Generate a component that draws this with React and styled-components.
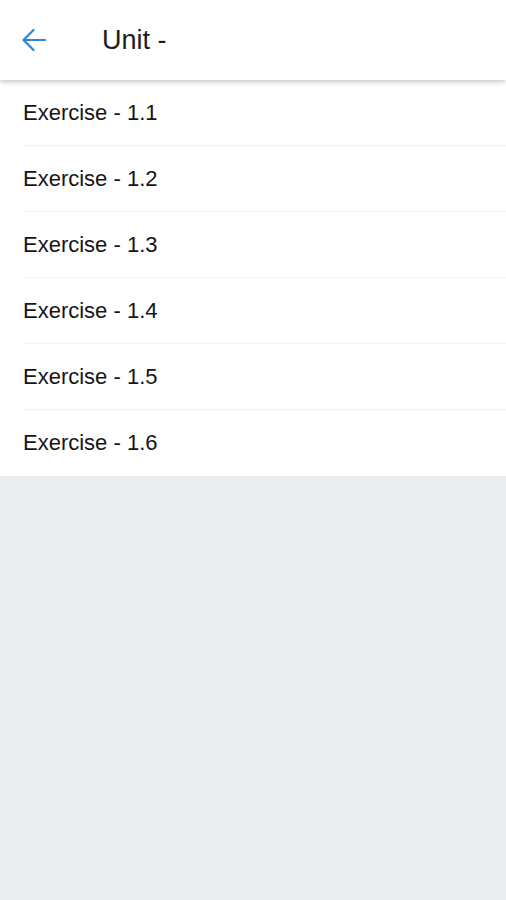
import React from "react";
import styled, { createGlobalStyle } from "styled-components";

const GlobalStyle = createGlobalStyle`
  html, body {
    margin: 0;
    padding: 0;
    background: #e9edf0;
    font-family: "Liberation Sans", Arial, sans-serif;
  }
`;

const Page = styled.div`
  min-height: 100vh;
  width: 100%;
  background: #e9edf0;
`;

const Header = styled.header`
  position: relative;
  z-index: 2;
  height: 80px;
  display: flex;
  align-items: center;
  background: #fff;
  box-shadow: 0 2px 5px rgba(0, 0, 0, 0.22);
`;

const BackButton = styled.button`
  width: 48px;
  height: 48px;
  margin-left: 10px;
  padding: 0;
  border: 0;
  background: transparent;
  display: flex;
  align-items: center;
  justify-content: center;
  cursor: pointer;
`;

const Title = styled.h1`
  margin: 0 0 0 44px;
  font-size: 27px;
  font-weight: 400;
  color: #1c1c1c;
`;

const List = styled.ul`
  list-style: none;
  margin: 0;
  padding: 0;
  background: #fff;
`;

const Row = styled.li`
  height: 66px;
  box-sizing: border-box;
  margin-left: 23px;
  display: flex;
  align-items: center;
  font-size: 22px;
  color: #151515;
  border-bottom: 1px solid ${(p) => (p.$last ? "transparent" : "#f1f1f1")};
`;

const BackArrow = () => (
  <svg width="26" height="24" viewBox="0 0 26 24" fill="none">
    <path
      d="M24 12H3M12.5 2L2.5 12l10 10"
      stroke="#2a86d9"
      strokeWidth="2.2"
      strokeLinecap="round"
      strokeLinejoin="round"
    />
  </svg>
);

const exercises = ["1.1", "1.2", "1.3", "1.4", "1.5", "1.6"];

export default function App() {
  return (
    <Page>
      <GlobalStyle />
      <Header>
        <BackButton aria-label="Back">
          <BackArrow />
        </BackButton>
        <Title>Unit -</Title>
      </Header>
      <List>
        {exercises.map((n, i) => (
          <Row key={n} $last={i === exercises.length - 1}>
            Exercise - {n}
          </Row>
        ))}
      </List>
    </Page>
  );
}
